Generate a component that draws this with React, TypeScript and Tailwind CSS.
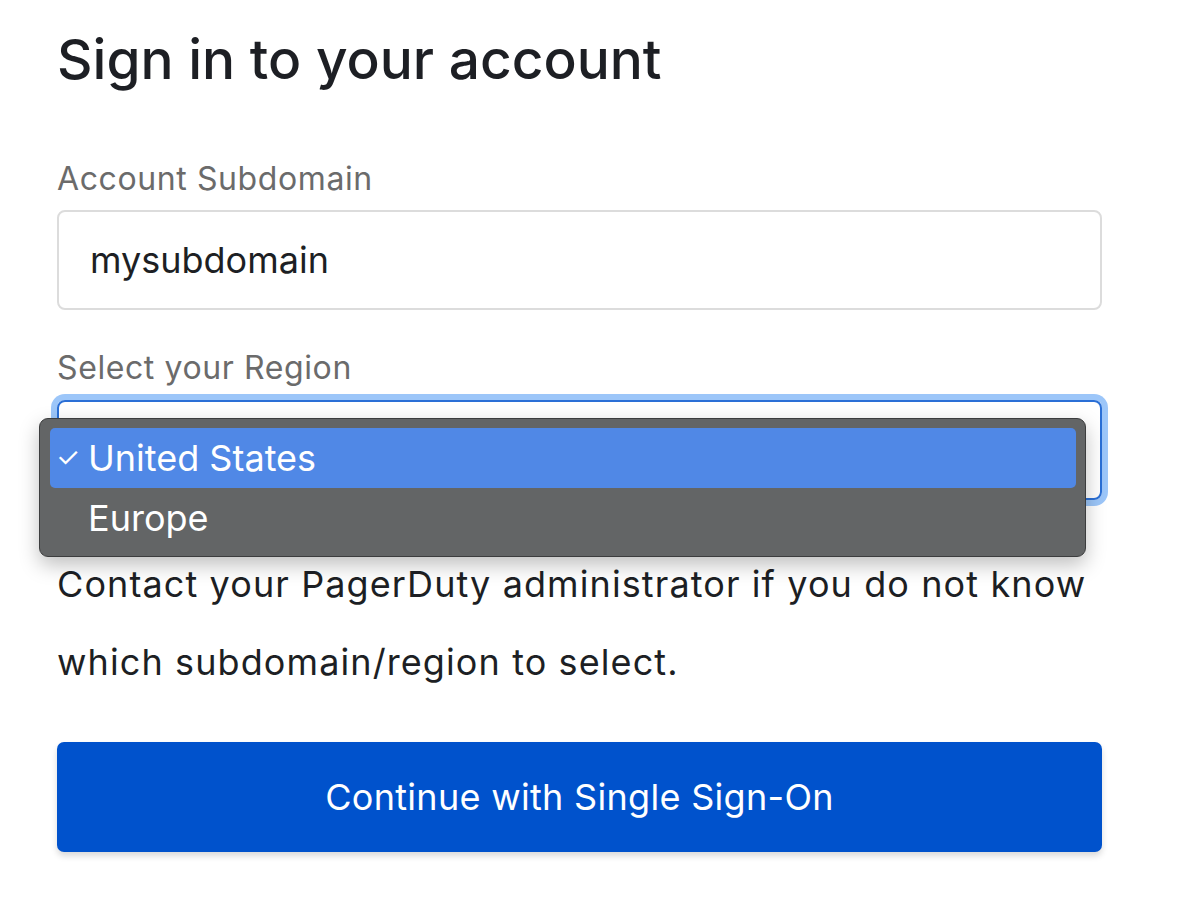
import React from 'react';

const font = { fontFamily: 'Inter, "Noto Sans", sans-serif' };

export default function App() {
  return (
    <div className="w-[1182px] h-[898px] bg-white text-[#1d1f24] overflow-hidden" style={font}>
      <div className="pl-[57px] w-[1102px]">
        <h1 className="pt-[24px] text-[55px] leading-[70px] font-medium">Sign in to your account</h1>

        <label className="block mt-[67px] text-[32px] leading-[36px] tracking-[0.6px] text-[#6b6b6b]">
          Account Subdomain
        </label>
        <div className="mt-[13px] h-[100px] rounded-[8px] border-2 border-[#dcdcdc] flex items-center pl-[31px] text-[36px]">
          mysubdomain
        </div>

        <label className="block mt-[40px] text-[32px] leading-[36px] tracking-[0.6px] text-[#6b6b6b]">
          Select your Region
        </label>

        {/* select with native dropdown open */}
        <div className="relative mt-[14px]">
          <div className="h-[100px] rounded-[8px] border-2 border-[#2a6fd6] shadow-[0_0_0_6px_#9cc6f9]" />
          <div className="absolute left-[-18px] top-[18px] w-[1047px] h-[139px] rounded-[9px] bg-[#636566] border border-[#3c3d3e] shadow-[0_8px_20px_rgba(0,0,0,0.25)] pl-[10px] pr-[9px] pt-[9px] text-white text-[36px]">
            <div className="h-[60px] rounded-[5px] bg-[#5088e6] flex items-center pl-[6px]">
              <span className="w-[32px] text-[27px]">✓</span>
              <span>United States</span>
            </div>
            <div className="h-[60px] flex items-center pl-[38px]">Europe</div>
          </div>
        </div>

        <p className="mt-[45px] text-[36px] leading-[78px] tracking-[1.1px]">
          Contact your PagerDuty administrator if you do not know which subdomain/region to select.
        </p>

        <button className="mt-[41px] w-full h-[110px] rounded-[7px] bg-[#0052cc] text-white text-[36px] tracking-[0.3px] shadow-[0_4px_6px_rgba(0,0,0,0.15)]">
          Continue with Single Sign-On
        </button>
      </div>
    </div>
  );
}
